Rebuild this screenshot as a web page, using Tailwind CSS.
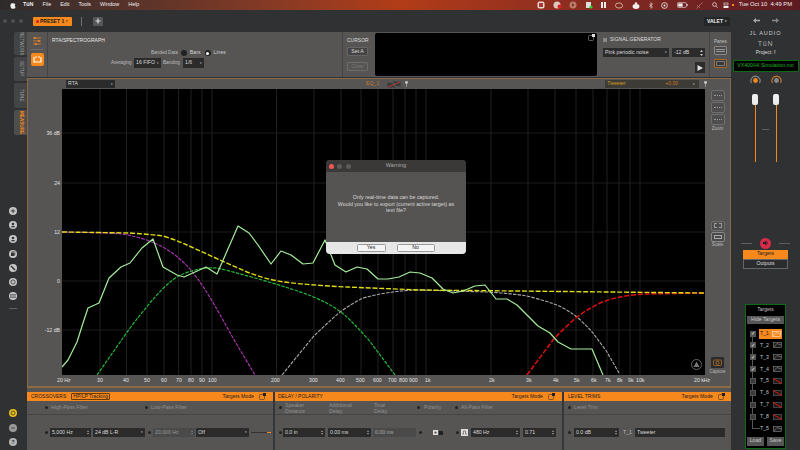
<!doctype html>
<html><head><meta charset="utf-8"><script src="https://cdn.jsdelivr.net/npm/@tailwindcss/browser@4"></script></head>
<body class="m-0 w-[800px] h-[450px] overflow-hidden bg-[#2f3133] font-['Liberation_Sans',sans-serif] text-[5.2px] leading-none text-[#d8d8d8]">
<div class="relative w-[800px] h-[450px] flex flex-col overflow-hidden">
<!-- menu bar -->
<div class="h-[10px] shrink-0 flex items-center px-[10px] text-[5.4px] text-[#eee] bg-gradient-to-r from-[#2e2a2a] via-[#b23c17] to-[#5c1a22]">
  <svg width="6" height="7" viewBox="0 0 6 7" class="mr-[7px]"><path d="M4 0.3 3.2 1.5C2.2 1.1 .4 1.4.4 3.5.4 5 1.4 6.7 2 6.7c.5 0 .7-.3 1.1-.3s.6.3 1.1.3c.6 0 1.2-1.2 1.4-1.8C4.6 4.4 4.6 2.8 5.5 2.3 5 1.5 4.3 1.4 3.6 1.5L4 .3Z" fill="#eee"/></svg>
  <span class="font-bold mr-[9px]">TüN</span><span class="mr-[9px]">File</span><span class="mr-[9px]">Edit</span><span class="mr-[9px]">Tools</span><span class="mr-[9px]">Window</span><span>Help</span>
  <div class="ml-auto flex items-center gap-[8.5px]">
    <svg width="8" height="8" viewBox="0 0 8 8" class="-mr-[1px]"><rect x=".5" y=".5" width="7" height="7" rx="2" fill="#e8d8d0"/><rect x="2" y="2" width="4" height="4" fill="#a33"/></svg>
    <svg width="9" height="8" viewBox="0 0 9 8" class="-mr-[1px]"><circle cx="4" cy="4" r="3.5" fill="#ddc8c0"/><circle cx="6.5" cy="5.5" r="2" fill="#e02020"/></svg>
    <svg width="8" height="8" viewBox="0 0 8 8" class="-mr-[1px]"><circle cx="4" cy="4" r="3.5" fill="#b97a68"/><path d="M3 2.2 5.5 4 3 5.8Z" fill="#7a3018"/></svg>
    <svg width="8" height="8" viewBox="0 0 8 8" class="-mr-[1px]"><rect x="1" y="1" width="5" height="6" fill="#ddd"/><circle cx="6" cy="6" r="1.6" fill="#3c3"/></svg>
    <svg width="7" height="8" viewBox="0 0 7 8" class="-mr-[1px]"><path d="M1 1h2v6H1zM4 1h2v6H4z" fill="#eee"/></svg>
    <svg width="9" height="7" viewBox="0 0 9 7"><ellipse cx="4" cy="3.5" rx="3.6" ry="2.6" fill="none" stroke="#e8c8b8" stroke-width=".8"/></svg>
    <svg width="8" height="7" viewBox="0 0 8 7"><ellipse cx="4" cy="4.5" rx="3.4" ry="2.4" fill="#eee"/><circle cx="4" cy="1.4" r="1.2" fill="#eee"/></svg>
    <svg width="4" height="7" viewBox="0 0 4 7"><path d="M.4 2 3.4 5 2 6.4V.6L3.4 2 .4 5" fill="none" stroke="#eee" stroke-width=".6"/></svg>
    <svg width="7" height="7" viewBox="0 0 7 7"><circle cx="3.5" cy="3.5" r="2.9" fill="none" stroke="#eee" stroke-width=".8"/><circle cx="3.5" cy="3.5" r="1" fill="#eee"/></svg>
    <svg width="11" height="6" viewBox="0 0 11 6"><rect x=".4" y=".6" width="9" height="4.8" rx="1" fill="none" stroke="#eee" stroke-width=".6"/><rect x="1.2" y="1.4" width="4.5" height="3.2" fill="#eee"/><rect x="9.8" y="2" width=".8" height="2" fill="#eee"/></svg>
    <svg width="7" height="7" viewBox="0 0 7 7"><path d="M.5 6.5 6.5.5M1 3 4 6" stroke="#c89888" stroke-width=".6"/></svg>
    <svg width="6" height="6" viewBox="0 0 6 6"><circle cx="2.5" cy="2.5" r="1.9" fill="none" stroke="#eee" stroke-width=".7"/><path d="M4 4 5.7 5.7" stroke="#eee" stroke-width=".7"/></svg>
  </div>
  <svg width="6" height="7" viewBox="0 0 6 7" class="ml-[5px]"><rect x="1" y="1" width="4" height="2" fill="none" stroke="#eee" stroke-width=".6"/><rect x=".5" y="4" width="5" height="2" fill="#eee"/></svg>
  <span class="w-[2px] h-[2px] bg-[#f7881c] ml-[3px]"></span>
  <span class="ml-[5px] whitespace-nowrap -mr-[2px] text-[5.8px]">Tue Oct 10&nbsp; 4:49 PM</span>
</div>

<div class="flex flex-1 min-h-0">
  <!-- left + centre -->
  <div class="w-[731px] shrink-0 flex flex-col">
    <!-- title row -->
    <div class="h-[22px] shrink-0 flex items-center bg-[#2f3133] pl-[3px]">
      <span class="w-[4px] h-[4px] rounded-full bg-[#4d4f51]"></span>
      <span class="w-[4px] h-[4px] rounded-full bg-[#4d4f51] ml-[4px]"></span>
      <span class="w-[4px] h-[4px] rounded-full bg-[#4d4f51] ml-[4px]"></span>
      <div class="ml-[10px] w-[39px] h-[9px] bg-[#f7881c] rounded-[1px] flex items-center pl-[3px] text-[#1c1c1c] font-bold text-[5px]">
        <span class="w-[3px] h-[3px] rounded-full bg-[#d9181e] mr-[1px]"></span>PRESET 1<span class="ml-[2px] text-[3px]">▾</span>
      </div>
      <span class="ml-[9px] w-[1px] h-[9px] bg-[#6d6f68]"></span>
      <div class="ml-[11px] w-[10px] h-[9px] rounded-[1px] bg-[#55575a] flex items-center justify-center"><svg width="6" height="6" viewBox="0 0 6 6"><path d="M3 .5v5M.5 3h5" stroke="#ddd" stroke-width="1.2"/></svg></div>
      <div class="ml-auto mr-[1px] w-[26px] h-[9px] bg-[#232527] flex items-center justify-center text-[#eee] font-bold text-[5px]">VALET<span class="ml-[2px] text-[3px]">▾</span></div>
    </div>
    <div class="flex flex-1 min-h-0">
      <!-- sidebar -->
      <div class="w-[27px] shrink-0 bg-[#2f3133] flex flex-col">
        <div class="pl-[14px] flex flex-col gap-[2px] h-[175px] text-[4.6px] text-[#a5a5a5]">
          <div class="w-[13px] h-[23px] bg-[#424446] rounded-l-[2px] flex items-center justify-center [writing-mode:vertical-rl]">NETWORK</div>
          <div class="w-[13px] h-[24px] bg-[#424446] rounded-l-[2px] flex items-center justify-center [writing-mode:vertical-rl]">SETUP</div>
          <div class="w-[13px] h-[25px] bg-[#424446] rounded-l-[2px] flex items-center justify-center [writing-mode:vertical-rl]">TUNE</div>
          <div class="w-[13px] h-[25px] bg-[#4e4e4d] rounded-l-[2px] flex items-center justify-center [writing-mode:vertical-rl] text-[#f7881c] font-bold">MEASURE</div>
        </div>
        <div class="flex flex-col items-center w-[26px] gap-[6.2px]">
          <svg width="8" height="8" viewBox="0 0 8 8"><circle cx="4" cy="4" r="4" fill="#c6c6c6"/><path d="M4 1.8v4.4M1.8 4h4.4" stroke="#333" stroke-width=".9"/></svg>
          <svg width="8" height="8" viewBox="0 0 8 8"><circle cx="4" cy="4" r="4" fill="#c6c6c6"/><circle cx="4" cy="3" r="1.3" fill="#333"/><path d="M1.8 6.2c.5-1.6 3.9-1.6 4.4 0Z" fill="#333"/></svg>
          <svg width="8" height="8" viewBox="0 0 8 8"><circle cx="4" cy="4" r="4" fill="#c6c6c6"/><circle cx="4" cy="3" r="1.3" fill="#333"/><path d="M1.8 6.2c.5-1.6 3.9-1.6 4.4 0Z" fill="#333"/></svg>
          <svg width="8" height="8" viewBox="0 0 8 8"><circle cx="4" cy="4" r="4" fill="#c6c6c6"/><rect x="2" y="2.6" width="3.4" height="3.4" fill="#333"/><rect x="3" y="1.8" width="3" height="3" fill="none" stroke="#333" stroke-width=".5"/></svg>
          <svg width="8" height="8" viewBox="0 0 8 8"><circle cx="4" cy="4" r="4" fill="#c6c6c6"/><path d="M2 2 6 6" stroke="#333" stroke-width="1.4"/></svg>
          <svg width="8" height="8" viewBox="0 0 8 8"><circle cx="4" cy="4" r="4" fill="#c6c6c6"/><circle cx="4" cy="4" r="2.1" fill="none" stroke="#333" stroke-width=".8"/></svg>
          <svg width="8" height="8" viewBox="0 0 8 8"><circle cx="4" cy="4" r="4" fill="#c6c6c6"/><path d="M1 2.6h6M1 4h6M1 5.4h6" stroke="#333" stroke-width=".6"/></svg>
          <span class="w-[8px] h-[1px] bg-[#5d5f61] mt-[2px]"></span>
        </div>
        <div class="flex flex-col items-center w-[26px] gap-[6.5px] mt-[100px]">
          <svg width="8" height="8" viewBox="0 0 8 8"><circle cx="4" cy="4" r="4" fill="#e9c21c"/><circle cx="4" cy="4" r="2" fill="none" stroke="#333" stroke-width=".8"/></svg>
          <svg width="8" height="8" viewBox="0 0 8 8"><circle cx="4" cy="4" r="4" fill="#9a9a9a"/><path d="M2.2 4h3.6" stroke="#333" stroke-width=".8"/></svg>
          <svg width="8" height="8" viewBox="0 0 8 8"><circle cx="4" cy="4" r="4" fill="#b5b5b5"/><text x="4" y="6" text-anchor="middle" font-size="5.5" font-weight="bold" fill="#333" font-family="Liberation Sans">?</text></svg>
        </div>
      </div>
      <!-- content -->
      <div class="flex-1 flex flex-col min-w-0">
        <!-- top panel -->
        <div class="h-[45px] shrink-0 bg-[#565554] flex">
          <div class="w-[21px] flex flex-col items-center border-r border-[#444] pt-[4px]">
            <svg width="10" height="10" viewBox="0 0 10 10"><path d="M1 2h8M1 5h8M1 8h8" stroke="#f7881c" stroke-width=".7"/><circle cx="3" cy="2" r="1" fill="#f7881c"/><circle cx="7" cy="5" r="1" fill="#f7881c"/><circle cx="4" cy="8" r="1" fill="#f7881c"/></svg>
            <span class="w-[12px] h-[1px] bg-[#6c6c6b] mt-[3px]"></span>
            <div class="w-[13px] h-[13px] rounded-[2px] bg-[#f7881c] mt-[3px] flex items-center justify-center"><svg width="9" height="9" viewBox="0 0 9 9"><path d="M1 2v5h7V2" fill="none" stroke="#fff" stroke-width="1.2"/><path d="M3 1v2M6 1v2" stroke="#fff" stroke-width="1"/></svg></div>
          </div>
          <div class="w-[295px] relative border-r border-[#444] pl-[4px] pt-[6px]">
            <div class="text-[#e5e5e5] text-[5px]">RTA/SPECTROGRAPH</div>
            <div class="flex items-center mt-[6px] pl-[99px] text-[#cfcfcf] h-[8px]">
              <span class="text-[4.6px] text-[#bdbdbd]">Banded Data</span>
              <span class="ml-[3px] w-[6px] h-[6px] rounded-full bg-[#222]"></span>
              <span class="ml-[3px]">Bars</span>
              <span class="ml-[4px] w-[6px] h-[6px] rounded-full bg-[#222] flex items-center justify-center"><span class="w-[3px] h-[3px] rounded-full bg-white"></span></span>
              <span class="ml-[3px]">Lines</span>
            </div>
            <div class="flex items-center mt-[1px] pl-[59px] h-[10px]">
              <span class="text-[#bdbdbd] text-[4.6px] w-[23px]">Averaging</span>
              <div class="w-[27px] h-[10px] bg-[#2b2b2b] flex items-center justify-between px-[2px]">16 FIFO<span class="text-[3px]">▾</span></div>
              <span class="ml-[2px] text-[#bdbdbd] text-[4.6px] w-[20px]">Banding</span>
              <div class="w-[21px] h-[10px] bg-[#2b2b2b] flex items-center justify-between px-[2px]">1/6<span class="text-[3px]">▾</span></div>
            </div>
          </div>
          <div class="w-[32px] pl-[4px] pt-[6px]">
            <div class="text-[#ddd] text-[5px]">CURSOR</div>
            <div class="mt-[4px] w-[21px] h-[9px] rounded-[1px] bg-[#444] border border-[#666] flex items-center justify-center text-[#ddd]">Set A</div>
            <div class="mt-[6px] w-[21px] h-[9px] rounded-[1px] border border-[#6c6c6c] flex items-center justify-center text-[#777]">Clear</div>
          </div>
          <div class="w-[222px] h-[43px] mt-[1px] bg-black rounded-[2px] relative">
            <svg width="7" height="7" viewBox="0 0 7 7" class="absolute right-[2px] top-[1px]"><rect x=".5" y="1.5" width="5" height="5" rx="1" fill="none" stroke="#999" stroke-width=".6"/><rect x="4" y="0" width="3" height="3" fill="#ddd"/></svg>
          </div>
          <div class="w-[113px] pl-[6px] pt-[5px] border-r border-[#444]">
            <div class="flex items-center text-[#ddd] text-[5px]"><span class="w-[4px] h-[4px] bg-[#888] mr-[3px]"></span>SIGNAL GENERATOR</div>
            <div class="flex mt-[6px]">
              <div class="w-[66px] h-[9px] bg-[#2b2b2b] flex items-center justify-between px-[2px]">Pink periodic noise<span class="text-[3px]">▾</span></div>
              <div class="ml-[3px] w-[33px] h-[9px] bg-[#2b2b2b] flex items-center justify-between px-[2px]">-12 dB<svg width="3" height="6" viewBox="0 0 3 6"><path d="M1.5 0 3 2H0ZM1.5 6 0 4h3Z" fill="#ccc"/></svg></div>
            </div>
            <div class="ml-[92px] mt-[5px] w-[10px] h-[11px] bg-[#2b2b2b] flex items-center justify-center"><svg width="6" height="6" viewBox="0 0 6 6"><path d="M.5 0 6 3 .5 6Z" fill="#ddd"/></svg></div>
          </div>
          <div class="flex-1 flex flex-col items-center pt-[8px] text-[4.5px] text-[#c5c5c5]">
            <span class="h-[6px]">Panes</span>
            <div class="w-[13px] h-[9px] rounded-[1px] border border-[#888] bg-[#4a4a4a] flex flex-col justify-center gap-[1px] px-[1px]"><span class="h-[1px] bg-[#999]"></span><span class="h-[1px] bg-[#999]"></span></div>
            <div class="mt-[4px] w-[13px] h-[9px] rounded-[1px] border border-[#a86a2a] bg-[#3a3a3a] p-[1px]"><span class="block w-full h-full border border-[#777]"></span></div>
          </div>
        </div>
        <!-- chart panel -->
        <div class="mt-[1px] h-[310px] shrink-0 relative bg-[#565554] border border-[#8a6a48] border-b-[2px] border-b-[#8c6a42]">
          <div class="h-[10px] relative flex items-center">
            <div class="ml-[38px] w-[49px] h-[8px] bg-[#2b2b2b] flex items-center justify-between px-[2px]">RTA<span class="text-[3px]">▾</span></div>
            <span class="ml-[251px] text-[#c87a28]">EQ_1</span>
            <svg width="14" height="7" viewBox="0 0 14 7" class="ml-[8px]"><rect x=".5" y=".5" width="13" height="6" fill="#3a3a3a"/><path d="M1 6 13 1" stroke="#c33" stroke-width=".9"/><path d="M1 1h4l4 5h4" fill="none" stroke="#999" stroke-width=".4"/></svg>
            <svg width="3" height="6" viewBox="0 0 3 6" class="ml-[4px]"><circle cx="1.5" cy="1.5" r="1.4" fill="#ccc"/><path d="M1.5 2v4" stroke="#ccc" stroke-width=".5"/></svg>
            <div class="ml-[197px] w-[94px] h-[8px] bg-[#3c3b35] flex items-center px-[2px]"><span class="text-[#d39a20]">Tweeter</span><span class="ml-auto text-[#c87a28] mr-[15px]">+0.00</span><span class="text-[3px] mr-[2px]">▾</span></div>
            <svg width="3" height="6" viewBox="0 0 3 6" class="ml-[5px]"><circle cx="1.5" cy="1.5" r="1.4" fill="#ccc"/><path d="M1.5 2v4" stroke="#ccc" stroke-width=".5"/></svg>
          </div>
          <div class="flex">
            <!-- y axis -->
            <div class="w-[34px] shrink-0 relative h-[286px] text-right text-[#e0e0e0]">
              <span class="absolute right-[2px] top-[42px]">36 dB</span>
              <span class="absolute right-[2px] top-[92px]">24</span>
              <span class="absolute right-[2px] top-[141px]">12</span>
              <span class="absolute right-[2px] top-[190px]">0</span>
              <span class="absolute right-[2px] top-[239px]">-12 dB</span>
            </div>
            <svg width="643" height="286" viewBox="62 89 643 286" class="shrink-0 bg-black block">
              <g stroke="#202020" stroke-width="1" fill="none">
                <path d="M100 89V375M126.5 89V375M147 89V375M164 89V375M178.6 89V375M191 89V375M202 89V375M212 89V375M276.5 89V375M314 89V375M341 89V375M361 89V375M378 89V375M393 89V375M405 89V375M416 89V375M426 89V375M491 89V375M528 89V375M555 89V375M576 89V375M593 89V375M607 89V375M619 89V375M630 89V375M640 89V375"/>
                <path d="M62 133H705M62 183H705M62 232H705M62 281H705M62 330H705" stroke="#1c1c1c"/>
              </g>
              <g fill="none" stroke-linejoin="round">
                <path d="M62 232L88 232.5Q113 233 121.5 234Q130 235 143.5 239Q157 243 168.5 250.5Q180 258 188.5 267.5Q197 277 205 289.5Q213 302 223 320L233 338L255 375" stroke="#a833b0" stroke-width="1.2" stroke-dasharray="3.5 1.2"/>
                <path d="M97 375L130 328Q150 302 161.5 290Q173 278 183 274Q193 270 203 268.5Q213 267 221.5 269Q230 271 251.5 277Q273 283 293 289.5Q313 296 326.5 303Q340 310 350 320Q360 330 370 341.5L395 375" stroke="#22b83a" stroke-width="1.2" stroke-dasharray="3.5 1.2"/>
                <path d="M282 375L313 337Q326 324 340 312Q351 304 363 298Q378 294 393 292Q406 290 420 290L487 292Q508 293 527 296Q543 300 557 305Q568 310 577 317Q586 325 593 333L607 352L619 373" stroke="#a8a8a8" stroke-width="1.1" stroke-dasharray="3.5 1.2"/>
                <path d="M527 375L553 340Q565 327 577 317Q588 309 600 303Q610 299 620 297Q631 295 643 294L705 293" stroke="#e01010" stroke-width="1.5" stroke-dasharray="5 1.8"/>
                <path d="M62 232L130 233Q147 234 163 236Q176 240 187 245L220 260L247 272Q260 277 273 280Q288 283 303 284Q325 286 347 287L420 290L705 293" stroke="#e0dc10" stroke-width="1.4" stroke-dasharray="5 1.8"/>
                <path d="M62 367 68 360 77 342 83 323 88 308 99 303 109 278 121 267 130 263 142 248 153 239 163 267 177 275 184 277 195 272 206 267 217 274 238 226 249 233 258 245 271 264 281 251 291 255 303 264 313 263 325 240 335 265 346 272 357 267 367 269 378 279 388 279 399 277 410 272 420 273 432 278 443 289 453 293 463 291 475 286 485 285 496 299 507 299 517 305 538 326 550 333 558 342 571 349 592 349 603 375" stroke="#a6ee9c" stroke-width="1.2"/>
              </g>
            </svg>
            <!-- tools -->
            <div class="flex-1 flex flex-col items-center text-[4.5px] text-[#bbb] relative">
              <div class="w-[14px] h-[11px] mt-[1px] rounded-[2px] border border-[#6e6e6e] bg-[#4e4e4e] flex items-center justify-center"><span class="w-[8px] border-t border-dotted border-[#999]"></span></div>
              <div class="w-[14px] h-[11px] mt-[1px] rounded-[2px] border border-[#6e6e6e] bg-[#4e4e4e] flex items-center justify-center"><span class="w-[8px] border-t border-dotted border-[#999]"></span></div>
              <div class="w-[14px] h-[11px] mt-[1px] rounded-[2px] border border-[#6e6e6e] bg-[#4e4e4e] flex items-center justify-center"><span class="w-[8px] border-t border-dotted border-[#999]"></span></div>
              <span class="mt-[2px]">Zoom</span>
              <div class="w-[14px] h-[10px] mt-[89px] rounded-[2px] border border-[#6e6e6e] bg-[#4e4e4e] flex items-center justify-center"><span class="w-[8px] h-[5px] border border-dashed border-[#999]"></span></div>
              <div class="w-[14px] h-[10px] mt-[1px] rounded-[2px] border border-[#888] bg-[#4a4a4a] flex items-center justify-center"><span class="w-[8px] h-[4px] border border-[#aaa]"></span></div>
              <span class="mt-[1px]">Scale</span>
              <div class="w-[13px] h-[11px] mt-[110px] rounded-[1px] bg-[#2b2b2b] flex items-center justify-center"><svg width="9" height="7" viewBox="0 0 9 7"><rect x=".5" y="1" width="8" height="5.5" rx="1" fill="none" stroke="#c87a28" stroke-width=".7"/><circle cx="4.5" cy="3.8" r="1.6" fill="none" stroke="#c87a28" stroke-width=".7"/></svg></div>
              <span class="mt-[2px]">Capture</span>
            </div>
          </div>
          <!-- x-axis labels -->
          <div class="h-[11px] relative text-[#e0e0e0]">
            <span class="absolute left-[29px] top-[3px]">20 Hz</span>
            <span class="absolute left-[69px] top-[3px]">30</span><span class="absolute left-[95px] top-[3px]">40</span><span class="absolute left-[116px] top-[3px]">50</span><span class="absolute left-[133px] top-[3px]">60</span><span class="absolute left-[148px] top-[3px]">70</span><span class="absolute left-[160px] top-[3px]">80</span><span class="absolute left-[171px] top-[3px]">90</span><span class="absolute left-[180px] top-[3px]">100</span>
            <span class="absolute left-[243px] top-[3px]">200</span><span class="absolute left-[281px] top-[3px]">300</span><span class="absolute left-[308px] top-[3px]">400</span><span class="absolute left-[328px] top-[3px]">500</span><span class="absolute left-[345px] top-[3px]">600</span><span class="absolute left-[360px] top-[3px]">700</span><span class="absolute left-[371px] top-[3px]">800</span><span class="absolute left-[381px] top-[3px]">900</span><span class="absolute left-[397px] top-[3px]">1k</span>
            <span class="absolute left-[461px] top-[3px]">2k</span><span class="absolute left-[498px] top-[3px]">3k</span><span class="absolute left-[525px] top-[3px]">4k</span><span class="absolute left-[546px] top-[3px]">5k</span><span class="absolute left-[563px] top-[3px]">6k</span><span class="absolute left-[577px] top-[3px]">7k</span><span class="absolute left-[589px] top-[3px]">8k</span><span class="absolute left-[600px] top-[3px]">9k</span><span class="absolute left-[608px] top-[3px]">10k</span>
            <span class="absolute left-[666px] top-[3px]">20 kHz</span>
          </div>
          <!-- logo badge -->
          <div class="absolute left-[663px] top-[280px] w-[11px] h-[11px] rounded-full border border-[#666] flex items-center justify-center"><svg width="7" height="7" viewBox="0 0 7 7"><path d="M3.5 .5 6.5 6H.5Z" fill="#777"/></svg></div>
        </div>
        <!-- bottom -->
        <div class="flex-1 bg-[#565554] pt-[4px] flex min-h-0">
          <!-- crossovers -->
          <div class="w-[248px] shrink-0 flex flex-col border-r-2 border-[#33363a]">
            <div class="h-[9px] bg-[#f7881c] flex items-center pl-[4px] pr-[7px] text-[#1c1c1c]">
              <span class="text-[5px]">CROSSOVERS</span>
              <span class="ml-[5px] border border-[#6b3c08] rounded-[1px] px-[1px] h-[7px] flex items-center text-[5px]">HP/LP Tracking</span>
              <span class="ml-auto">Targets Mode</span>
              <svg width="7" height="7" viewBox="0 0 7 7" class="ml-[5px]"><rect x=".5" y="1.5" width="5" height="5" rx="1" fill="none" stroke="#333" stroke-width=".6"/><rect x="4" y="0" width="3" height="3" fill="#222"/></svg>
            </div>
            <div class="h-[14px] flex items-center border-b border-[#454545] text-[#8f8f8f] pl-[18px]">
              <span class="w-[3px] h-[3px] rounded-full bg-[#222] mr-[3px]"></span><span class="w-[94px]">High-Pass Filter</span>
              <span class="w-[3px] h-[3px] rounded-full bg-[#222] mr-[3px]"></span><span>Low-Pass Filter</span>
            </div>
            <div class="flex items-center pl-[18px] mt-[13px] h-[9px]">
              <span class="w-[3px] h-[3px] rounded-full bg-[#222]"></span>
              <div class="ml-[2px] w-[41px] h-[9px] bg-[#2b2b2b] flex items-center justify-between px-[2px]">5,000 Hz<svg width="2" height="5" viewBox="0 0 3 6"><path d="M1.5 0 3 2H0ZM1.5 6 0 4h3Z" fill="#ccc"/></svg></div>
              <div class="ml-[2px] w-[52px] h-[9px] bg-[#2b2b2b] flex items-center justify-between px-[2px]">24 dB L-R<span class="text-[3px]">▾</span></div>
              <span class="ml-[3px] w-[3px] h-[3px] rounded-full bg-[#222]"></span>
              <div class="ml-[2px] w-[42px] h-[9px] bg-[#4a4a4a] text-[#999] flex items-center justify-between px-[2px]">20,000 Hz<svg width="2" height="5" viewBox="0 0 3 6"><path d="M1.5 0 3 2H0ZM1.5 6 0 4h3Z" fill="#888"/></svg></div>
              <div class="ml-[1px] w-[53px] h-[9px] bg-[#2b2b2b] flex items-center justify-between px-[2px]">Off<span class="text-[3px]">▾</span></div>
              <span class="ml-[2px] w-[16px] h-[1px] bg-[#333]"></span><span class="w-[4px] h-[1px] bg-[#f7881c]"></span>
            </div>
          </div>
          <!-- delay -->
          <div class="w-[289px] shrink-0 flex flex-col border-r-2 border-[#33363a]">
            <div class="h-[9px] bg-[#f7881c] flex items-center pl-[3px] pr-[7px] text-[#1c1c1c]">
              <span class="text-[5px]">DELAY / POLARITY</span>
              <span class="ml-auto">Targets Mode</span>
              <svg width="7" height="7" viewBox="0 0 7 7" class="ml-[5px]"><rect x=".5" y="1.5" width="5" height="5" rx="1" fill="none" stroke="#333" stroke-width=".6"/><rect x="4" y="0" width="3" height="3" fill="#222"/></svg>
            </div>
            <div class="h-[14px] flex items-center border-b border-[#454545] text-[#8f8f8f] pl-[4px]">
              <span class="w-[3px] h-[3px] rounded-full bg-[#222] mr-[3px]"></span>
              <span class="w-[44px] leading-[6px]">Speaker<br>Distance</span>
              <span class="w-[45px] leading-[6px]">Additional<br>Delay</span>
              <span class="w-[43px] leading-[6px]">Total<br>Delay</span>
              <span class="w-[3px] h-[3px] rounded-full bg-[#222] mr-[4px]"></span><span class="w-[31px]">Polarity</span>
              <span class="w-[3px] h-[3px] rounded-full bg-[#222] mr-[3px]"></span><span>All-Pass Filter</span>
            </div>
            <div class="flex items-center pl-[4px] mt-[13px] h-[9px]">
              <span class="w-[3px] h-[3px] rounded-full bg-[#222]"></span>
              <div class="ml-[1px] w-[42px] h-[9px] bg-[#2b2b2b] flex items-center justify-between px-[2px]">0.0 in<svg width="2" height="5" viewBox="0 0 3 6"><path d="M1.5 0 3 2H0ZM1.5 6 0 4h3Z" fill="#ccc"/></svg></div>
              <div class="ml-[3px] w-[43px] h-[9px] bg-[#2b2b2b] flex items-center justify-between px-[2px]">0.00 ms<svg width="2" height="5" viewBox="0 0 3 6"><path d="M1.5 0 3 2H0ZM1.5 6 0 4h3Z" fill="#ccc"/></svg></div>
              <div class="ml-[2px] w-[43px] h-[9px] bg-[#4a4a4a] text-[#aaa] flex items-center px-[2px]">0.00 ms</div>
              <span class="ml-[3px] w-[3px] h-[3px] rounded-full bg-[#222]"></span>
              <span class="ml-[11px] w-[5px] h-[5px] bg-[#ddd] text-[#222] flex items-center justify-center text-[5px] font-bold">+</span>
              <span class="ml-[1px] w-[4px] h-[4px] bg-[#222]"></span>
              <span class="ml-[13px] w-[3px] h-[3px] rounded-full bg-[#222]"></span>
              <div class="ml-[2px] w-[7px] h-[7px] bg-[#ddd] flex items-center justify-center"><svg width="5" height="5" viewBox="0 0 5 5"><path d="M0 4h1.5V1h2v3H5" fill="none" stroke="#333" stroke-width=".5"/></svg></div>
              <div class="ml-[3px] w-[49px] h-[9px] bg-[#2b2b2b] flex items-center justify-between px-[2px]">480 Hz<svg width="2" height="5" viewBox="0 0 3 6"><path d="M1.5 0 3 2H0ZM1.5 6 0 4h3Z" fill="#ccc"/></svg></div>
              <div class="ml-[3px] w-[33px] h-[9px] bg-[#2b2b2b] flex items-center justify-between px-[2px]">0.71<svg width="2" height="5" viewBox="0 0 3 6"><path d="M1.5 0 3 2H0ZM1.5 6 0 4h3Z" fill="#ccc"/></svg></div>
            </div>
          </div>
          <!-- level -->
          <div class="flex-1 flex flex-col min-w-0">
            <div class="h-[9px] bg-[#f7881c] flex items-center pl-[4px] pr-[6px] text-[#1c1c1c]">
              <span class="text-[5px]">LEVEL TRIMS</span>
              <span class="ml-auto">Targets Mode</span>
              <svg width="7" height="7" viewBox="0 0 7 7" class="ml-[5px]"><rect x=".5" y="1.5" width="5" height="5" rx="1" fill="none" stroke="#333" stroke-width=".6"/><rect x="4" y="0" width="3" height="3" fill="#222"/></svg>
            </div>
            <div class="h-[14px] flex items-center border-b border-[#454545] text-[#8f8f8f] pl-[4px]">
              <span class="w-[3px] h-[3px] rounded-full bg-[#222] mr-[3px]"></span><span>Level Trim</span>
            </div>
            <div class="flex items-center pl-[4px] mt-[13px] h-[9px]">
              <span class="w-[3px] h-[3px] rounded-full bg-[#222]"></span>
              <div class="ml-[3px] w-[45px] h-[9px] bg-[#2b2b2b] flex items-center justify-between px-[2px]">0.0 dB<svg width="2" height="5" viewBox="0 0 3 6"><path d="M1.5 0 3 2H0ZM1.5 6 0 4h3Z" fill="#ccc"/></svg></div>
              <span class="ml-[4px] w-[12px] text-[#bbb]">T_1</span>
              <div class="w-[90px] h-[9px] bg-[#2b2b2b] flex items-center px-[2px]">Tweeter</div>
            </div>
          </div>
        </div>
      </div>
    </div>
  </div>
  <!-- right column -->
  <div class="flex-1 flex flex-col items-center relative bg-[#2f3133]">
    <div class="flex gap-[12px] mt-[7px] h-[6px] items-center">
      <svg width="7" height="5" viewBox="0 0 7 5"><path d="M0 2.5 3 0v1.7h4v1.6H3V5Z" fill="#aaa"/></svg>
      <svg width="7" height="5" viewBox="0 0 7 5"><path d="M7 2.5 4 0v1.7H0v1.6h4V5Z" fill="#888"/></svg>
    </div>
    <div class="mt-[8px] text-[5.5px] tracking-[1px] text-[#ccc]">JL AUDIO</div>
    <div class="mt-[3px] text-[7px] tracking-[0.8px] text-[#aaa]">TüN</div>
    <div class="mt-[3px] text-[#ddd] text-[5px]">Project: f</div>
    <div class="mt-[5px] w-[66px] h-[12px] bg-black border border-[#0d6b14] rounded-[1px] flex items-center justify-center text-[#20b02c] text-[5.2px] whitespace-nowrap overflow-hidden">VX400/HI Simulation mo</div>
    <div class="mt-[3px] flex gap-[10px]">
      <svg width="11" height="11" viewBox="0 0 11 11"><path d="M1.5 8a4.6 4.6 0 1 1 8 0" fill="none" stroke="#8a8a8a" stroke-width="1.1"/><circle cx="5.5" cy="5.5" r="2.4" fill="#f7881c"/></svg>
      <svg width="11" height="11" viewBox="0 0 11 11"><path d="M1.5 8a4.6 4.6 0 1 1 8 0" fill="none" stroke="#d07a22" stroke-width="1.1"/><circle cx="5.5" cy="5.5" r="2.4" fill="#8a8a8a"/></svg>
    </div>
    <div class="mt-[8px] flex gap-[15px] h-[68px] items-start">
      <div class="w-[6px] h-[68px] flex flex-col items-center"><span class="w-[6px] h-[11px] rounded-[2px] bg-[#eee]"></span><span class="w-[1px] flex-1 bg-[#f7881c]"></span></div>
      <div class="w-[6px] h-[68px] flex flex-col items-center"><span class="w-[6px] h-[11px] rounded-[2px] bg-[#eee]"></span><span class="w-[1px] flex-1 bg-[#f7881c]"></span></div>
    </div>
    <span class="absolute left-[31px] top-[119px] w-[7px] h-[1px] bg-[#5d5f61]"></span>
    <div class="mt-[76px] flex items-center">
      <span class="w-[11px] h-[1px] bg-[#5d5f61]"></span>
      <div class="mx-[8px] w-[11px] h-[11px] rounded-full bg-[#d92a4a] flex items-center justify-center"><svg width="7" height="6" viewBox="0 0 7 6"><path d="M1 2h1.5L4.5.5v5L2.5 4H1Z" fill="#222"/><path d="M5.3 2v2" stroke="#222" stroke-width=".6"/></svg></div>
      <span class="w-[11px] h-[1px] bg-[#5d5f61]"></span>
    </div>
    <div class="mt-[1px] w-[45px] h-[9px] bg-[#f7881c] text-[#1c1c1c] flex items-center justify-center">Targets</div>
    <div class="w-[45px] h-[10px] border border-[#666] bg-[#2a2c2e] text-[#ddd] flex items-center justify-center">Outputs</div>
    <!-- targets box -->
    <div class="mt-[35px] w-[41px] h-[145px] bg-black border border-[#0d6b14] flex flex-col text-[#c5c5c5] relative">
      <div class="text-center mt-[2px] text-[5px]">Targets</div>
      <div class="mx-[1px] mt-[4px] h-[8px] bg-[#555] flex items-center justify-center">Hide Targets</div>
      <span class="absolute left-[6px] top-[28px] w-[1px] h-[95px] bg-[#555]"></span>
      <span class="absolute left-[6px] top-[123px] w-[8px] h-[1px] bg-[#555]"></span>
      <div class="relative flex flex-col mt-[7px] pl-[4px] gap-[5.9px]">
        <div class="flex items-center h-[6px]"><span class="w-[6px] h-[6px] bg-[#555] text-[5px] text-white flex items-center justify-center">✓</span><div class="ml-[3px] w-[23px] h-[10px] -my-[2px] bg-[#f7881c] text-[#222] flex items-center pl-[1px]">T_1<svg width="9" height="6" viewBox="0 0 9 6" class="ml-auto mr-[1px]"><rect x=".3" y=".3" width="8.4" height="5.4" fill="#f7881c" stroke="#fff" stroke-width=".5"/><path d="M1 5 4 1.5 8 3" fill="none" stroke="#fff" stroke-width=".5"/></svg></div></div>
        <div class="flex items-center h-[6px]"><span class="w-[6px] h-[6px] bg-[#555] text-[5px] text-white flex items-center justify-center">✓</span><span class="ml-[4px] w-[13px]">T_2</span><svg width="9" height="6" viewBox="0 0 9 6"><rect x=".3" y=".3" width="8.4" height="5.4" fill="#1c1c1c" stroke="#999" stroke-width=".5"/><path d="M1 5 4 1.5 8 3" fill="none" stroke="#aaa" stroke-width=".5"/></svg></div>
        <div class="flex items-center h-[6px]"><span class="w-[6px] h-[6px] bg-[#555] text-[5px] text-white flex items-center justify-center">✓</span><span class="ml-[4px] w-[13px]">T_3</span><svg width="9" height="6" viewBox="0 0 9 6"><rect x=".3" y=".3" width="8.4" height="5.4" fill="#1c1c1c" stroke="#999" stroke-width=".5"/><path d="M1 5 4 1.5 8 3" fill="none" stroke="#aaa" stroke-width=".5"/></svg></div>
        <div class="flex items-center h-[6px]"><span class="w-[6px] h-[6px] bg-[#555] text-[5px] text-white flex items-center justify-center">✓</span><span class="ml-[4px] w-[13px]">T_4</span><svg width="9" height="6" viewBox="0 0 9 6"><rect x=".3" y=".3" width="8.4" height="5.4" fill="#1c1c1c" stroke="#999" stroke-width=".5"/><path d="M1 5 4 1.5 8 3" fill="none" stroke="#aaa" stroke-width=".5"/></svg></div>
        <div class="flex items-center h-[6px]"><span class="w-[6px] h-[6px] bg-[#3a3a3a] border-[0.5px] border-[#555]"></span><span class="ml-[4px] w-[13px]">T_5</span><svg width="9" height="6" viewBox="0 0 9 6"><rect x=".3" y=".3" width="8.4" height="5.4" fill="#1c1c1c" stroke="#777" stroke-width=".5"/><path d="M0 .5 9 5.5" stroke="#e01010" stroke-width="1"/></svg></div>
        <div class="flex items-center h-[6px]"><span class="w-[6px] h-[6px] bg-[#3a3a3a] border-[0.5px] border-[#555]"></span><span class="ml-[4px] w-[13px]">T_6</span><svg width="9" height="6" viewBox="0 0 9 6"><rect x=".3" y=".3" width="8.4" height="5.4" fill="#1c1c1c" stroke="#777" stroke-width=".5"/><path d="M0 .5 9 5.5" stroke="#e01010" stroke-width="1"/></svg></div>
        <div class="flex items-center h-[6px]"><span class="w-[6px] h-[6px] bg-[#3a3a3a] border-[0.5px] border-[#555]"></span><span class="ml-[4px] w-[13px]">T_7</span><svg width="9" height="6" viewBox="0 0 9 6"><rect x=".3" y=".3" width="8.4" height="5.4" fill="#1c1c1c" stroke="#777" stroke-width=".5"/><path d="M0 .5 9 5.5" stroke="#e01010" stroke-width="1"/></svg></div>
        <div class="flex items-center h-[6px]"><span class="w-[6px] h-[6px] bg-[#3a3a3a] border-[0.5px] border-[#555]"></span><span class="ml-[4px] w-[13px]">T_8</span><svg width="9" height="6" viewBox="0 0 9 6"><rect x=".3" y=".3" width="8.4" height="5.4" fill="#1c1c1c" stroke="#777" stroke-width=".5"/><path d="M0 .5 9 5.5" stroke="#e01010" stroke-width="1"/></svg></div>
        <div class="flex items-center h-[6px]"><span class="w-[6px] h-[6px]"></span><span class="ml-[4px] w-[13px]">T_5</span><svg width="9" height="6" viewBox="0 0 9 6"><rect x=".3" y=".3" width="8.4" height="5.4" fill="#1c1c1c" stroke="#999" stroke-width=".5"/><path d="M1 5 4 1.5 8 3" fill="none" stroke="#aaa" stroke-width=".5"/></svg></div>
      </div>
      <div class="flex gap-[3px] mt-auto mb-[2px] mx-[1px]">
        <div class="w-[17px] h-[9px] bg-[#555] flex items-center justify-center">Load</div>
        <div class="w-[17px] h-[9px] bg-[#555] flex items-center justify-center">Save</div>
      </div>
    </div>
  </div>
</div>
<!-- dialog -->
<div class="absolute left-[326px] top-[160px] w-[140px] h-[94px] rounded-[4px] overflow-hidden flex flex-col bg-[#555452]">
  <div class="h-[12px] bg-[#3b3938] flex items-center justify-center relative text-[#aaa] text-[5.5px]">
    <span class="absolute left-[3px] w-[5px] h-[5px] rounded-full bg-[#ee5a52]"></span>
    <span class="absolute left-[11px] w-[5px] h-[5px] rounded-full bg-[#5c5a58]"></span>
    <span class="absolute left-[20px] w-[5px] h-[5px] rounded-full bg-[#5c5a58]"></span>
    Warning
  </div>
  <div class="flex-1 flex flex-col items-center pt-[22px] text-[#d8d8d8] text-[5.35px] leading-[6.6px] text-center">
    <div>Only real-time data can be captured.</div><div>Would you like to export (current active target) as</div><div>text file?</div>
  </div>
  <div class="h-[12px] bg-[#e6e6e6] flex items-center justify-center gap-[11px] pr-[1px]">
    <div class="w-[29px] h-[8px] rounded-[1.5px] bg-[#f4f4f4] border border-[#999] text-[#222] flex items-center justify-center">Yes</div>
    <div class="w-[38px] h-[8px] rounded-[1.5px] bg-[#f4f4f4] border border-[#999] text-[#222] flex items-center justify-center">No</div>
  </div>
</div>
</div>
</body></html>
